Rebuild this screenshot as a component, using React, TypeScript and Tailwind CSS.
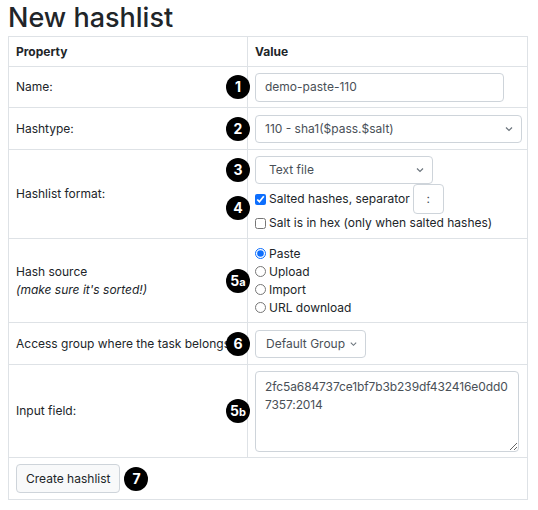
import type { ReactNode } from 'react';

function Badge({ children }: { children: ReactNode }) {
  return (
    <span className="flex h-[24px] w-[24px] items-center justify-center rounded-full bg-black text-[14px] font-bold leading-none text-white">
      {children}
    </span>
  );
}

function Marked({ badge, children }: { badge: ReactNode; children: ReactNode }) {
  return (
    <div className="relative">
      <div className="absolute left-[-29px] top-1/2 -translate-y-1/2">
        <Badge>{badge}</Badge>
      </div>
      {children}
    </div>
  );
}

function Chevron() {
  return (
    <svg width="10" height="10" viewBox="0 0 10 10" className="text-[#6c757d]">
      <path d="M2 3.5 L5 6.5 L8 3.5" fill="none" stroke="currentColor" strokeWidth="1.2" />
    </svg>
  );
}

function Select({ value, className, padLeft }: { value: string; className: string; padLeft: string }) {
  return (
    <div
      className={`flex h-[28px] items-center justify-between gap-[4px] whitespace-nowrap rounded-[4px] border border-[#ced4da] bg-white pr-[7px] text-[12px] text-[#495057] ${padLeft} ${className}`}
    >
      <span>{value}</span>
      <Chevron />
    </div>
  );
}

const cell = 'border border-[#dee2e6] px-[7px] align-middle';

export default function App() {
  return (
    <div className="bg-white px-[8px] pt-[2px] font-['Inter',sans-serif] text-[12px] text-[#212529]">
      <h2 className="text-[27px] font-medium leading-[32px]">New hashlist</h2>

      <table className="mt-[2px] w-[520px] table-fixed border-collapse border border-[#dee2e6]">
        <colgroup>
          <col className="w-[239px]" />
          <col />
        </colgroup>
        <tbody>
          <tr className="h-[30px]">
            <th className={`${cell} text-left font-bold`}>Property</th>
            <th className={`${cell} text-left font-bold`}>Value</th>
          </tr>

          <tr className="h-[41px]">
            <td className={cell}>Name:</td>
            <td className={cell}>
              <Marked badge="1">
                <div className="flex h-[29px] w-[249px] items-center rounded-[4px] border border-[#ced4da] px-[9px] text-[#495057]">
                  demo-paste-110
                </div>
              </Marked>
            </td>
          </tr>

          <tr className="h-[42px]">
            <td className={cell}>Hashtype:</td>
            <td className={cell}>
              <Marked badge="2">
                <Select value="110 - sha1($pass.$salt)" className="w-[267px]" padLeft="pl-[9px]" />
              </Marked>
            </td>
          </tr>

          <tr className="h-[89px]">
            <td className={cell}>Hashlist format:</td>
            <td className={cell}>
              <div className="flex flex-col">
                <Marked badge="3">
                  <Select value="Text file" className="w-[178px]" padLeft="pl-[13px]" />
                </Marked>
                <Marked badge="4">
                  <div className="flex items-center gap-[3px]">
                    <input type="checkbox" defaultChecked className="m-0 h-[11px] w-[11px] accent-[#0d6efd]" />
                    <span>Salted hashes, separator</span>
                    <div className="flex h-[30px] w-[31px] items-center justify-center rounded-[4px] border border-[#ced4da] text-[#495057]">
                      :
                    </div>
                  </div>
                  <div className="flex items-center gap-[3px]">
                    <input type="checkbox" className="m-0 h-[11px] w-[11px]" />
                    <span>Salt is in hex (only when salted hashes)</span>
                  </div>
                </Marked>
              </div>
            </td>
          </tr>

          <tr className="h-[84px]">
            <td className={cell}>
              <div>Hash source</div>
              <div className="italic">(make sure it's sorted!)</div>
            </td>
            <td className={cell}>
              <Marked
                badge={
                  <span>
                    5<span className="text-[11px]">a</span>
                  </span>
                }
              >
                {['Paste', 'Upload', 'Import', 'URL download'].map((label, i) => (
                  <label key={label} className="flex h-[18px] items-center gap-[3px]">
                    <input
                      type="radio"
                      name="source"
                      defaultChecked={i === 0}
                      className="m-0 h-[11px] w-[11px] accent-[#0d6efd]"
                    />
                    <span>{label}</span>
                  </label>
                ))}
              </Marked>
            </td>
          </tr>

          <tr className="h-[42px]">
            <td className={`${cell} overflow-hidden whitespace-nowrap`}>Access group where the task belongs to</td>
            <td className={cell}>
              <Marked badge="6">
                <Select value="Default Group" className="w-[111px]" padLeft="pl-[10px]" />
              </Marked>
            </td>
          </tr>

          <tr className="h-[93px]">
            <td className={cell}>Input field:</td>
            <td className={cell}>
              <Marked
                badge={
                  <span>
                    5<span className="text-[11px]">b</span>
                  </span>
                }
              >
                <textarea
                  readOnly
                  defaultValue="2fc5a684737ce1bf7b3b239df432416e0dd07357:2014"
                  className="block h-[81px] w-[264px] resize-y rounded-[4px] border border-[#ced4da] py-[6px] pl-[9px] pr-[6px] text-[12px] leading-[18px] tracking-[-0.1px] text-[#495057] outline-none"
                />
              </Marked>
            </td>
          </tr>

          <tr className="h-[42px]">
            <td colSpan={2} className={cell}>
              <div className="flex items-center gap-[4px]">
                <button
                  type="button"
                  className="h-[29px] rounded-[4px] border border-[#ced4da] bg-[#f8f9fa] px-[9px] text-[12px] text-[#212529]"
                >
                  Create hashlist
                </button>
                <Badge>7</Badge>
              </div>
            </td>
          </tr>
        </tbody>
      </table>
    </div>
  );
}
